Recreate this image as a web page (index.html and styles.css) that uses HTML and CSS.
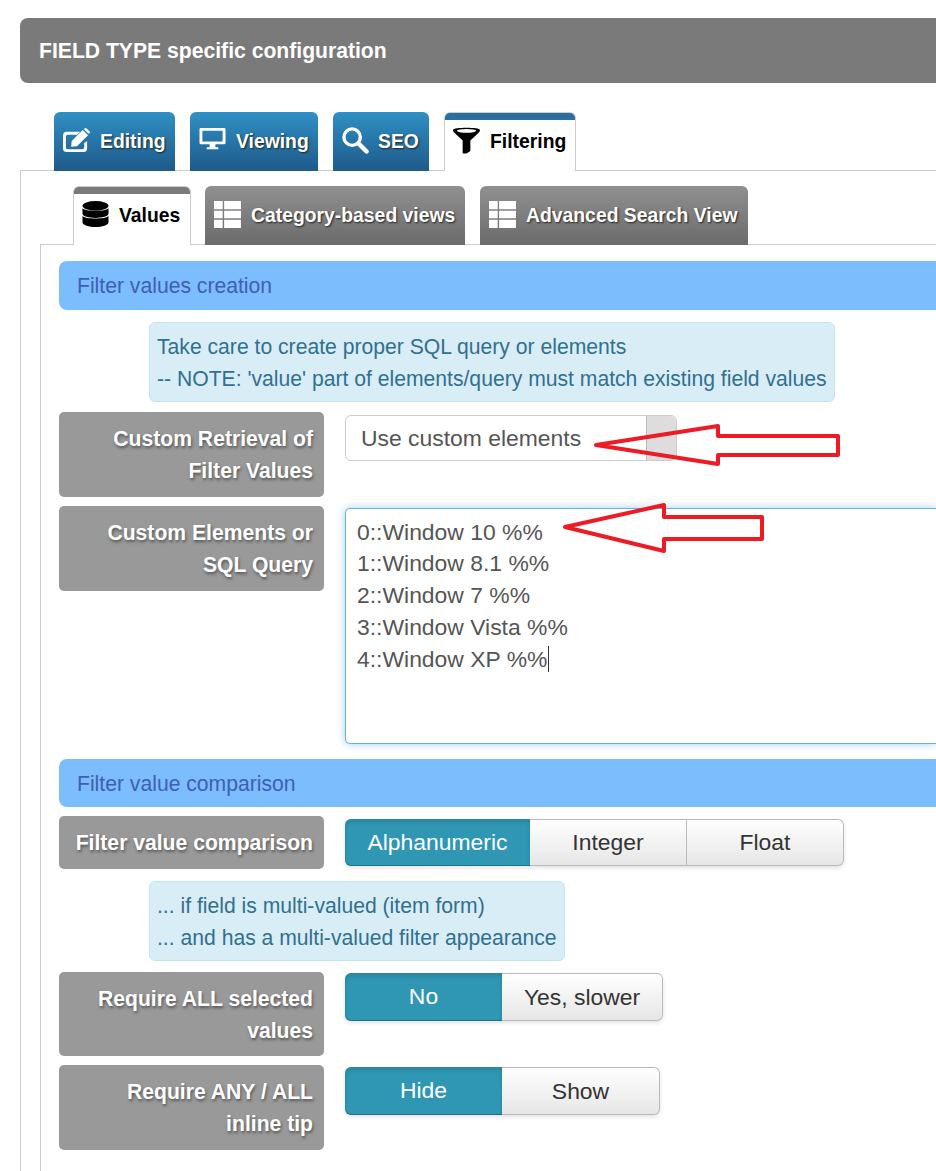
FILE: index.html
```html
<!DOCTYPE html>
<html lang="en">
<head>
    <meta charset="UTF-8">
    <title>FIELD TYPE specific configuration</title>
    <link rel="stylesheet" href="styles.css">
</head>
<body>
    <div class="page">
        <h1 class="page-title">FIELD TYPE specific configuration</h1>

        <!-- Main tabs -->
        <ul class="tabs main-tabs">
            <li class="tab tab-edit">
                <svg class="icon" viewBox="0 0 28 28"><path d="M25 14.500V22a4 4 0 0 1-4 4H4a4 4 0 0 1-4-4V9a4 4 0 0 1 4-4H18l-3.500 3H5a2 2 0 0 0-2 2v11a2 2 0 0 0 2 2h15a2 2 0 0 0 2-2v-4.500z" fill="#fff"/><path d="M9 14.500L20.500 3l5.500 5.500L14.500 20 8.500 20.500zM22.500 1.500a1.500 1.500 0 0 1 2 0l3 3a1.500 1.500 0 0 1 0 2l-1 .5-5-5z" fill="#fff"/></svg>
                Editing
            </li>
            <li class="tab tab-view">
                <svg class="icon" viewBox="0 0 28 28"><path d="M2 1h24a1.500 1.500 0 0 1 1.500 1.500v14a1.500 1.500 0 0 1-1.500 1.500H17v3h3v2H8v-2h3v-3H2a1.500 1.500 0 0 1-1.500-1.500v-14A1.500 1.500 0 0 1 2 1zm1.500 3v11h21V4z" fill="#fff" fill-rule="evenodd"/></svg>
                Viewing
            </li>
            <li class="tab tab-seo">
                <svg class="icon" viewBox="0 0 28 28"><circle cx="10.500" cy="10.500" r="8.500" fill="none" stroke="#fff" stroke-width="3.500"/><path d="M17.500 17.500l8 8" stroke="#fff" stroke-width="4.500" stroke-linecap="round"/></svg>
                SEO
            </li>
            <li class="tab tab-filter active">
                <svg class="icon" viewBox="0 0 28 28"><path d="M0 3C0 0 28 0 28 3c0 1.500-1 2.500-2.500 4L18 14v11l-4 2.500h-3a1 1 0 0 1-1-1V14L2.500 7C1 5.500 0 4.500 0 3z" fill="#000"/><ellipse cx="14" cy="4" rx="10" ry="2" fill="#fff"/></svg>
                Filtering
            </li>
        </ul>

        <div class="panel">
            <!-- Sub tabs -->
            <ul class="tabs sub-tabs">
                <li class="tab tab-values active">
                    <svg class="icon" viewBox="0 0 28 28"><ellipse cx="14" cy="5" rx="13.500" ry="5" fill="#000"/><path d="M.5 7.500c2 3.500 25 3.500 27 0V13c0 6-27 6-27 0zM.5 15.500c2 3.500 25 3.500 27 0V22c0 6.500-27 6.500-27 0z" fill="#000"/></svg>
                    Values
                </li>
                <li class="tab tab-cat">
                    <svg class="icon" viewBox="0 0 28 28"><path d="M0 0h9v8.500H0zM10.500 0H28v8.500H10.500zM0 10h9v8H0zM10.500 10H28v8H10.500zM0 19.500h9V28H0zM10.500 19.500H28V28H10.500z" fill="#fff"/></svg>
                    Category-based views
                </li>
                <li class="tab tab-adv">
                    <svg class="icon" viewBox="0 0 28 28"><path d="M0 0h9v8.500H0zM10.500 0H28v8.500H10.500zM0 10h9v8H0zM10.500 10H28v8H10.500zM0 19.500h9V28H0zM10.500 19.500H28V28H10.500z" fill="#fff"/></svg>
                    Advanced Search View
                </li>
            </ul>

            <div class="panel inner-panel">
                <div class="section-title">Filter values creation</div>
                <div class="note note-wide">
                    Take care to create proper SQL query or elements<br>
                    -- NOTE: 'value' part of elements/query must match existing field values
                </div>

                <div class="row">
                    <label class="row-label">Custom Retrieval of<br>Filter Values</label>
                    <div class="select-box">
                        <span>Use custom elements</span>
                        <i class="select-arrow"></i>
                    </div>
                </div>

                <div class="row">
                    <label class="row-label">Custom Elements or<br>SQL Query</label>
                    <div class="text-box">0::Window 10 %%
1::Window 8.1 %%
2::Window 7 %%
3::Window Vista %%
4::Window XP %%<span class="caret"></span></div>
                </div>

                <div class="section-title section-second">Filter value comparison</div>

                <div class="row">
                    <label class="row-label">Filter value comparison</label>
                    <div class="btn-group">
                        <span class="btn on btn-alpha">Alphanumeric</span>
                        <span class="btn btn-int">Integer</span>
                        <span class="btn btn-int">Float</span>
                    </div>
                </div>

                <div class="note note-small">
                    ... if field is multi-valued (item form)<br>
                    ... and has a multi-valued filter appearance
                </div>

                <div class="row row-all">
                    <label class="row-label">Require ALL selected<br>values</label>
                    <div class="btn-group">
                        <span class="btn on btn-half">No</span>
                        <span class="btn btn-yes">Yes, slower</span>
                    </div>
                </div>

                <div class="row row-tip">
                    <label class="row-label">Require ANY / ALL<br>inline tip</label>
                    <div class="btn-group">
                        <span class="btn on btn-half">Hide</span>
                        <span class="btn btn-show">Show</span>
                    </div>
                </div>
            </div>
        </div>

        <!-- Red arrows drawn over the screenshot -->
        <svg class="callouts" width="936" height="1171" viewBox="0 0 936 1171">
            <path d="M596 445L718 426V436H838V455H718V464Z"/>
            <path d="M565 527L664 505V517H762V539H664V551Z"/>
        </svg>
    </div>
</body>
</html>
```

FILE: styles.css
```css
html, body {
    margin: 0;
    padding: 0;
    background: #fff;
    overflow: hidden;
}
body {
    width: 936px;
    height: 1171px;
    font-family: "Liberation Sans", Arial, sans-serif;
    font-size: 21.15px;
    color: #333;
}
.page {
    box-sizing: border-box;
    width: 936px;
    padding: 18px 0 0 20px;
}
.page-title {
    height: 65px;
    margin: 0;
    padding-left: 19px;
    background: #7a7a7a;
    border-radius: 8px 0 0 8px;
    color: #fff;
    font-size: 21.15px;
    font-weight: bold;
    line-height: 66px;
}
.tabs {
    display: flex;
    margin: 0;
    padding: 0;
    list-style: none;
    position: relative;
    z-index: 1;
}
.main-tabs {
    margin: 29px 0 -1px 34px;
    gap: 15px;
}
.sub-tabs {
    margin: 15px 0 -1px 52px;
    gap: 14px;
}
.tab {
    box-sizing: border-box;
    display: flex;
    flex: none;
    align-items: center;
    height: 59px;
    padding: 0 0 0 9px;
    gap: 10px;
    border-radius: 6px 6px 0 0;
    font-weight: bold;
    font-size: 19.35px;
    white-space: nowrap;
    color: #fff;
    text-shadow: 1px 1px 2px #222;
    background: linear-gradient(#3090c4, #1e5a8a);
}
.sub-tabs .tab {
    background: linear-gradient(#909090, #6b6b6b);
}
.tab.active {
    padding: 0 0 2px 8px;
    background: linear-gradient(#2a6f9f 7px, #fff 7px);
    border: 1px solid #ccc;
    border-bottom: 0;
    color: #000;
    text-shadow: none;
}
.sub-tabs .tab.active {
    background: linear-gradient(#7a7a7a 7px, #fff 7px);
}
.icon {
    flex: none;
    width: 27px;
    height: 27px;
    margin-bottom: 2px;
}
.tab-edit { width: 121px; }
.tab-view { width: 128px; }
.tab-seo { width: 96px; gap: 9px; }
.tab-filter { width: 132px; }
.tab-values { width: 118px; }
.tab-cat { width: 260px; }
.tab-adv { width: 268px; margin-left: 1px; }
.panel {
    border-top: 1px solid #ccc;
    border-left: 1px solid #ccc;
}
.inner-panel {
    margin-left: 19px;
    padding: 16px 0 12px 18px;
}
.section-title {
    box-sizing: border-box;
    height: 49px;
    padding-left: 18px;
    background: #7cbdfd;
    border-radius: 8px 0 0 8px;
    color: #3f5fb5;
    line-height: 50px;
}
.section-second {
    height: 48px;
    margin: 15px 0 9px;
    line-height: 49px;
}
.note {
    box-sizing: border-box;
    height: 80px;
    margin: 12px 0 10px 90px;
    padding: 8px 7px;
    background: #d9edf7;
    border: 1px solid #bce8f1;
    border-radius: 6px;
    color: #31708f;
    line-height: 32px;
}
.note-wide { width: 686px; }
.note-small { width: 416px; }
.row {
    display: flex;
    align-items: flex-start;
    gap: 21px;
    margin-bottom: 9px;
}
.row-all {
    margin-top: 11px;
}
.row-label {
    box-sizing: border-box;
    flex: none;
    width: 265px;
    padding: 11px 11px 10px;
    background: #999;
    border-radius: 5px;
    color: #fff;
    font-weight: bold;
    line-height: 32px;
    text-align: right;
    text-shadow: 1px 2px 3px #555;
}
.row-all .row-label {
    padding-bottom: 9px;
}
.select-box {
    box-sizing: border-box;
    display: flex;
    align-items: center;
    justify-content: space-between;
    width: 332px;
    height: 46px;
    margin-top: 3px;
    padding-left: 15px;
    background: #fff;
    border: 1px solid #ccc;
    border-radius: 6px;
    color: #555;
    font-size: 22.9px;
}
.select-arrow {
    width: 29px;
    height: 44px;
    background: #ddd;
    border-left: 1px solid #bbb;
    border-radius: 0 6px 6px 0;
}
.text-box {
    box-sizing: border-box;
    flex: 1;
    height: 236px;
    margin-top: 2px;
    padding: 7.6px 11px 7px;
    background: #fff;
    border: 1px solid #66afe9;
    border-right: 0;
    border-radius: 5px 0 0 5px;
    box-shadow: 0 0 8px rgba(102, 175, 233, .6);
    color: #555;
    font-size: 22.9px;
    line-height: 31.8px;
    white-space: pre-line;
}
.caret {
    display: inline-block;
    width: 1px;
    height: 26px;
    margin-left: 1px;
    background: #333;
    vertical-align: -5px;
}
.btn-group {
    display: flex;
    margin-top: 3px;
    border-radius: 6px;
    box-shadow: 0 2px 4px rgba(0, 0, 0, .12);
}
.row-all .btn-group {
    margin-top: 1px;
}
.row-tip .btn-group {
    margin-top: 2px;
}
.btn {
    box-sizing: border-box;
    height: 47px;
    background: linear-gradient(#fff, #e6e6e6);
    border: 1px solid #bbb;
    border-left: 0;
    color: #333;
    font-size: 22.9px;
    line-height: 45px;
    text-align: center;
}
.row-all .btn, .row-tip .btn {
    height: 48px;
    line-height: 46px;
}
.btn:first-child {
    border-radius: 6px 0 0 6px;
}
.btn:last-child {
    border-radius: 0 6px 6px 0;
}
.btn.on {
    background: #2f96b4;
    border: 0;
    box-shadow: inset 0 3px 4px rgba(0, 0, 0, .12), inset 0 -1px 0 rgba(0, 0, 0, .25);
    color: #fff;
    line-height: 47px;
}
.btn-alpha { width: 185px; }
.btn-int { width: 157px; }
.btn-half { width: 157px; }
.btn-yes { width: 161px; }
.btn-show { width: 158px; }
.callouts {
    position: absolute;
    top: 0;
    left: 0;
    z-index: 2;
    pointer-events: none;
}
.callouts path {
    fill: none;
    stroke: #ed1c24;
    stroke-width: 4;
    stroke-linejoin: round;
}
```
